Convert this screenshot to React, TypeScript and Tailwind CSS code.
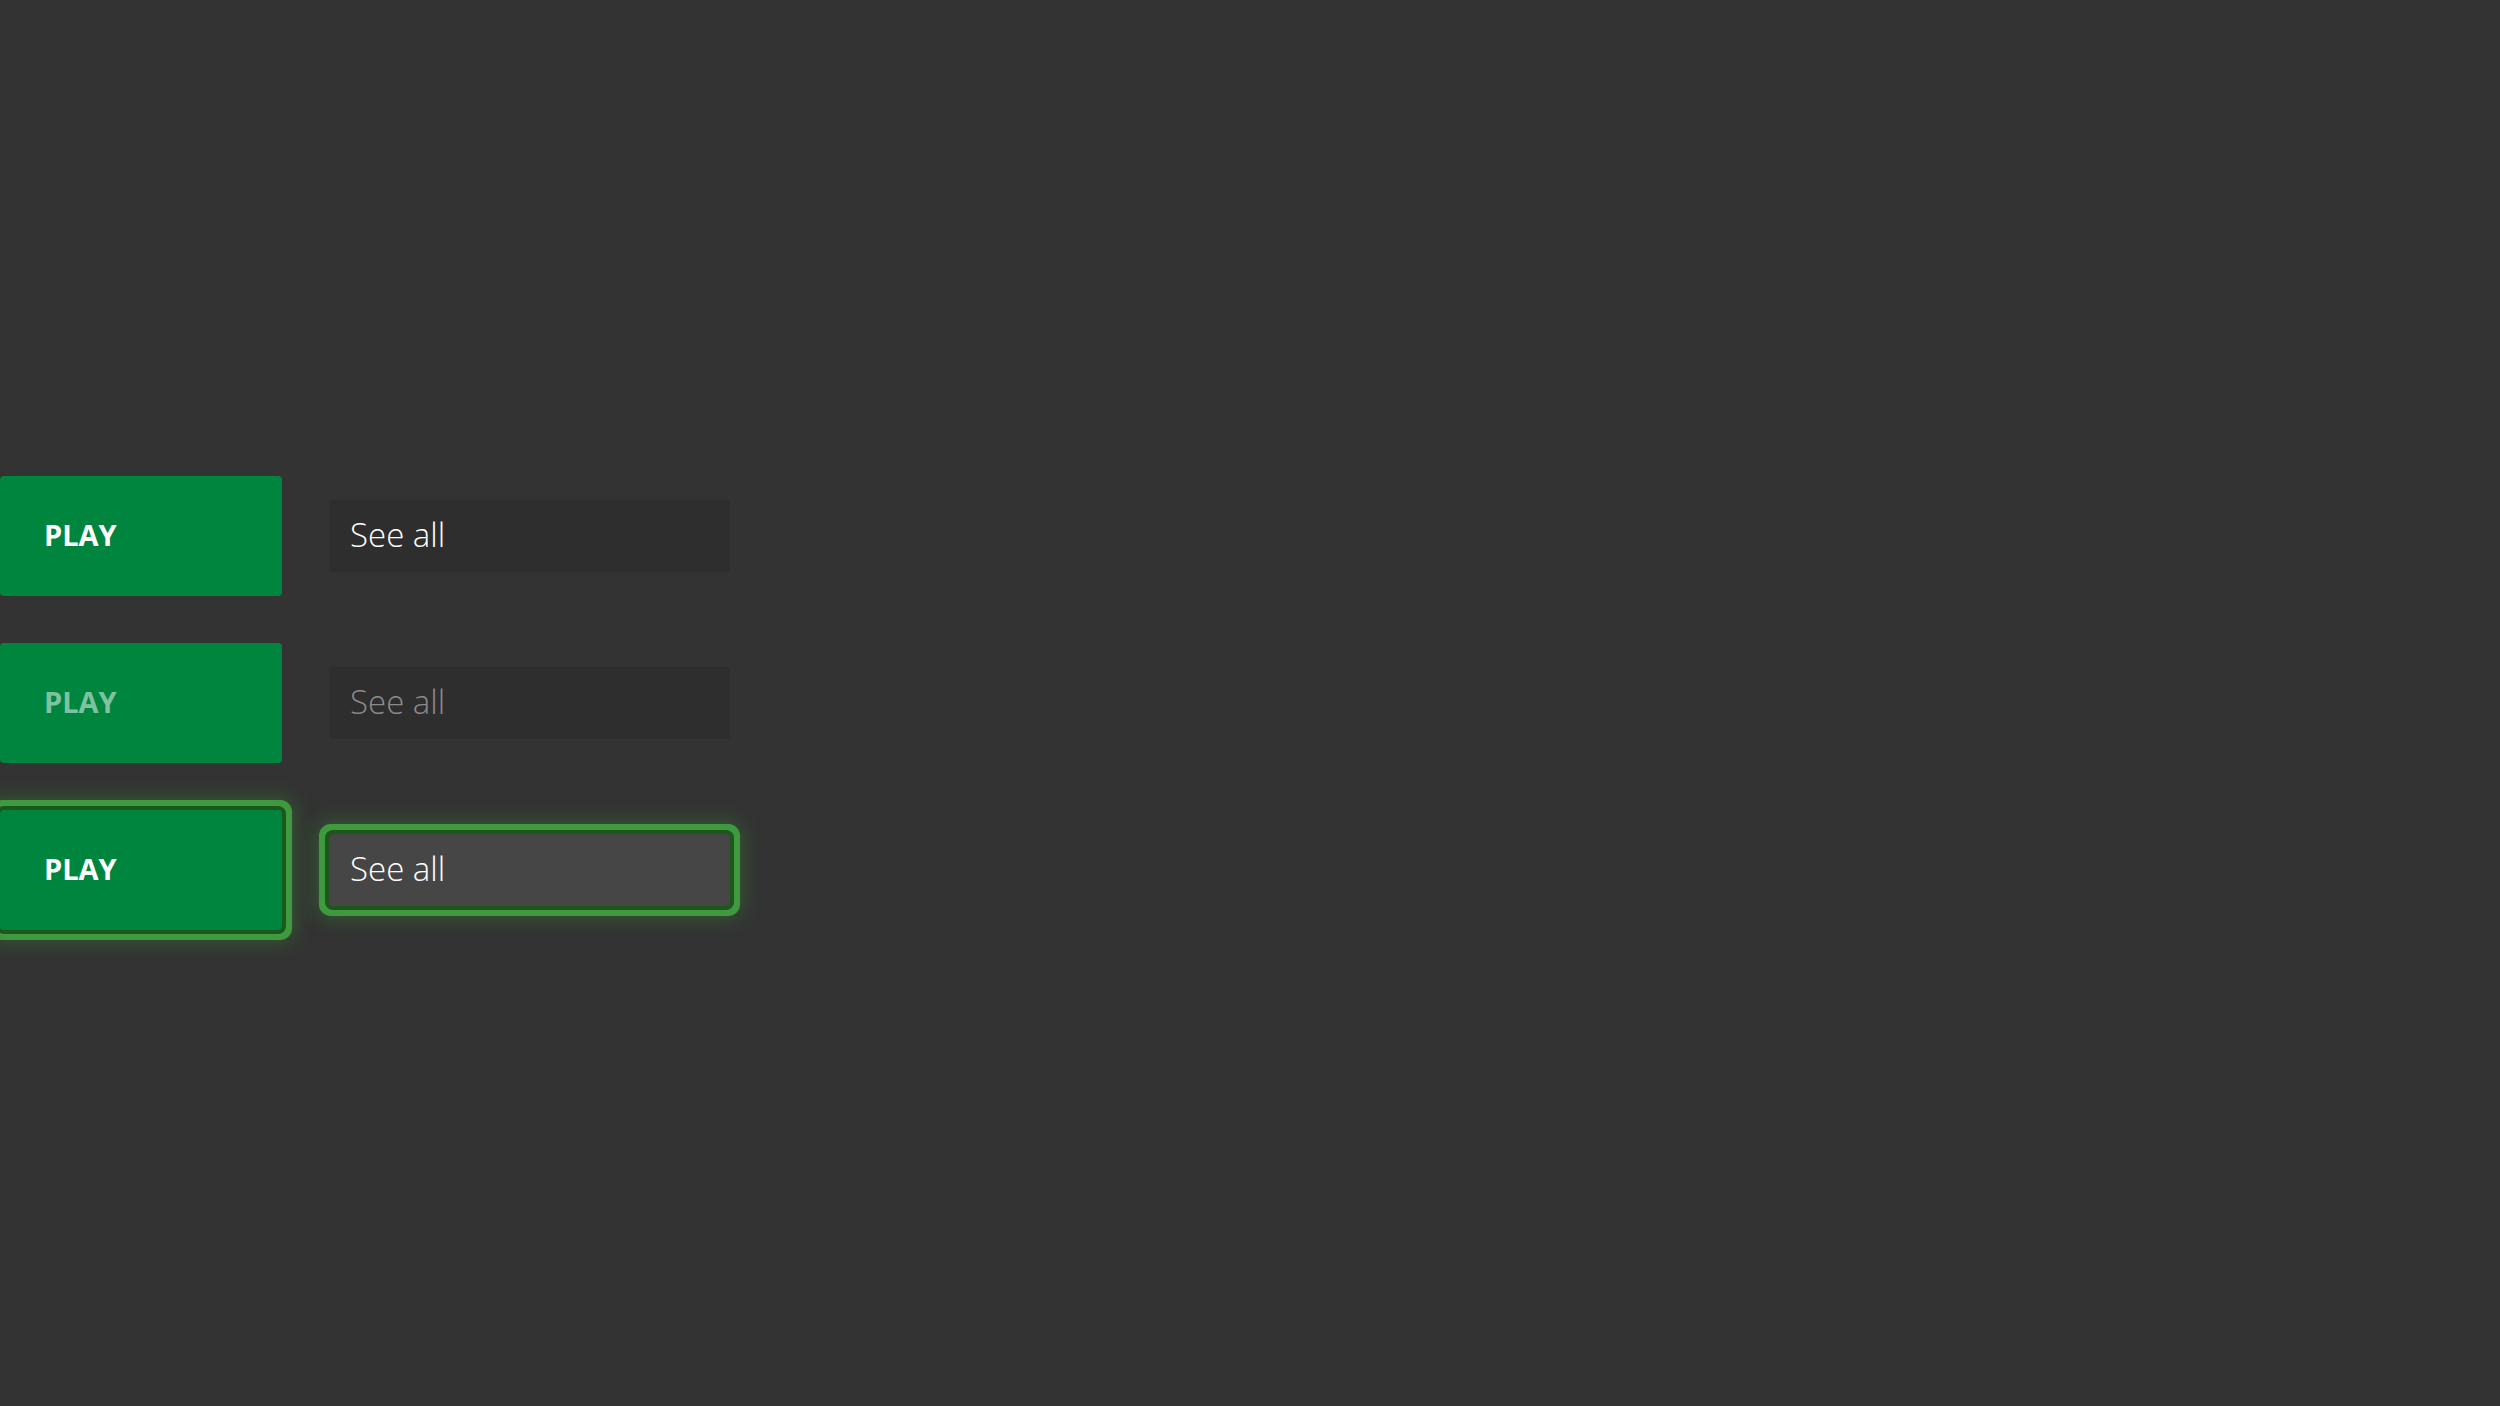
import React from 'react';

type RowProps = {
  state: 'rest' | 'disabled' | 'focus';
};

const focusRing =
  'shadow-[0_0_0_4px_#1c571c,0_0_0_10px_#3f9a3f,0_0_20px_12px_rgba(56,150,56,0.4)]';

const ActionRow = ({ state }: RowProps) => {
  const focused = state === 'focus';
  const disabled = state === 'disabled';

  return (
    <div className="flex items-center h-[120px]">
      <div
        className={`flex items-center w-[282px] h-[120px] pl-[44px] pb-[2px] rounded-[4px] bg-[#00853f] ${
          focused ? focusRing : ''
        }`}
      >
        <span className={`text-[29px] font-bold ${disabled ? 'text-[#7fc29f]' : 'text-white'}`}>PLAY</span>
      </div>
      <div
        className={`ml-[47px] flex items-center w-[401px] h-[72px] pl-[21px] pb-[3px] rounded-[4px] ${
          focused ? `bg-[#464646] ${focusRing}` : 'bg-[#2e2e2e]'
        }`}
      >
        <span className={`text-[33px] font-[350] ${disabled ? 'text-[#8a8a8a]' : 'text-white'}`}>See all</span>
      </div>
    </div>
  );
};

const App = () => {
  return (
    <div
      className="w-screen h-screen overflow-hidden bg-[#333333] pt-[476px] flex flex-col gap-[47px]"
      style={{ fontFamily: '"Open Sans", "Noto Sans", sans-serif' }}
    >
      <ActionRow state="rest" />
      <ActionRow state="disabled" />
      <ActionRow state="focus" />
    </div>
  );
};

export default App;
